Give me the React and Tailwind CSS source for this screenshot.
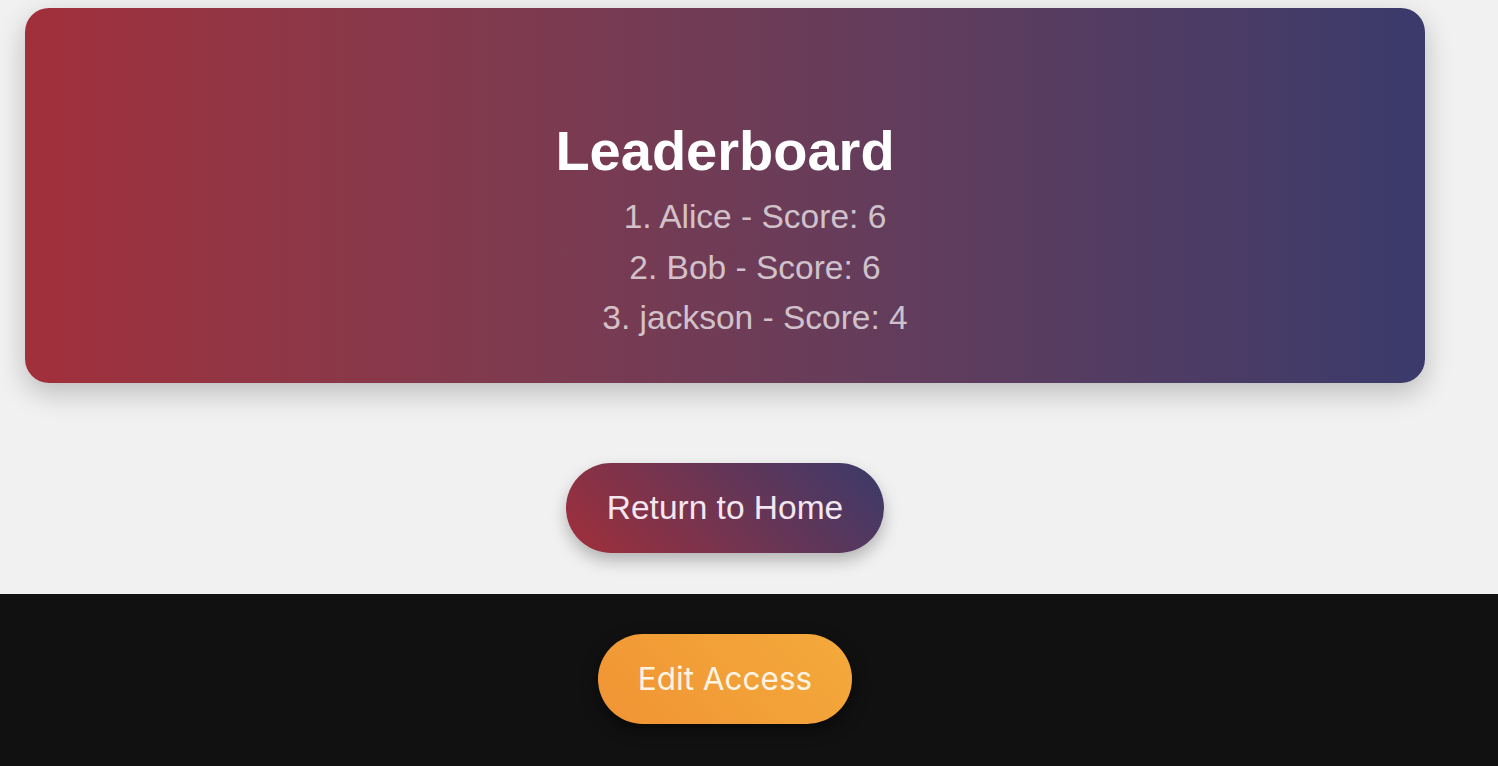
export default function App() {
  const players = [
    { name: 'Alice', score: 6 },
    { name: 'Bob', score: 6 },
    { name: 'jackson', score: 4 },
  ];

  return (
    <div className="min-h-screen bg-[#f1f1f1] flex flex-col font-['Liberation_Sans',Arial,sans-serif]">
      <div className="w-[1450px] px-[25px] pt-2">
        <div className="h-[375px] rounded-[24px] bg-gradient-to-r from-[#a12f3a] to-[#3a3a6b] shadow-[0_10px_28px_rgba(0,0,0,0.22)] flex flex-col items-center pt-[111px]">
          <h2 className="text-[56px] leading-[64px] font-bold text-white">Leaderboard</h2>
          <ul className="mt-[9px] pl-[60px] text-center text-[33.5px] leading-[50.5px] text-white/70">
            {players.map((p, i) => (
              <li key={p.name}>
                {i + 1}. {p.name} - Score: {p.score}
              </li>
            ))}
          </ul>
        </div>
      </div>

      <div className="w-[1450px] flex justify-center pt-[80px] pb-[41px]">
        <button
          type="button"
          className="w-[318px] h-[90px] rounded-full bg-[linear-gradient(45deg,#a12f3a,#3a3a6b)] text-[33.5px] text-[#f3e6ee] shadow-[0_8px_16px_rgba(0,0,0,0.25)]"
        >
          Return to Home
        </button>
      </div>

      <footer className="flex-1 bg-[#111111] pt-10 pb-10">
        <div className="w-[1450px] flex justify-center">
          <button
            type="button"
            className="w-[254px] h-[90px] rounded-full bg-[linear-gradient(45deg,#f09434,#f4aa3b)] text-[31.5px] text-[#fff4e4] font-['Inter',sans-serif] shadow-[0_6px_16px_rgba(0,0,0,0.5)]"
          >
            Edit Access
          </button>
        </div>
      </footer>
    </div>
  );
}
